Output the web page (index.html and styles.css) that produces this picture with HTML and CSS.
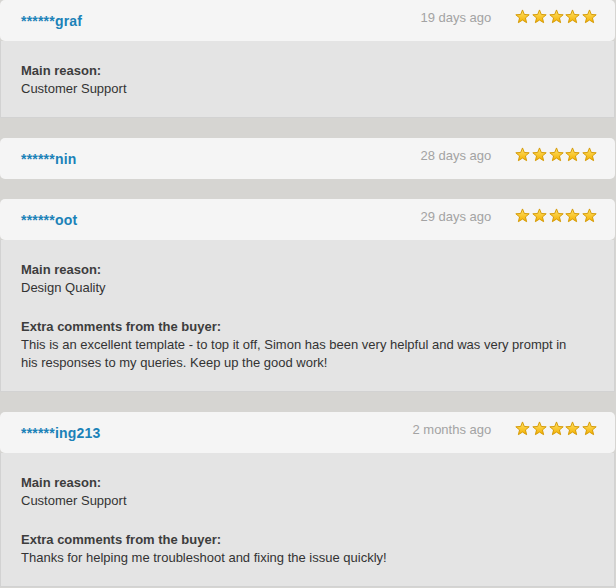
FILE: index.html
```html
<!DOCTYPE html>
<html>
<head>
<meta charset="utf-8">
<link rel="stylesheet" href="styles.css">
</head>
<body>
<svg class="defs" width="0" height="0">
  <defs>
    <linearGradient id="sg" x1="0" y1="0" x2="0" y2="1">
      <stop offset="0" stop-color="#ffe36a"/>
      <stop offset="1" stop-color="#f4b000"/>
    </linearGradient>
    <symbol id="star" viewBox="0 0 16 16">
      <polygon points="8,1 9.94,5.83 15.13,6.18 11.14,9.52 12.41,14.57 8,11.8 3.59,14.57 4.86,9.52 0.87,6.18 6.06,5.83" fill="url(#sg)" stroke="#d39700" stroke-width="1" stroke-linejoin="round"/>
    </symbol>
  </defs>
</svg>

<div class="list">
  <div class="review">
    <div class="head">
      <span class="user">******graf</span>
      <span class="meta"><span class="time">19 days ago</span><span class="stars"><svg><use href="#star"/></svg><svg><use href="#star"/></svg><svg><use href="#star"/></svg><svg><use href="#star"/></svg><svg><use href="#star"/></svg></span></span>
    </div>
    <div class="body">
      <div class="sec"><div class="label">Main reason:</div><div class="text">Customer Support</div></div>
    </div>
  </div>

  <div class="review">
    <div class="head">
      <span class="user">******nin</span>
      <span class="meta"><span class="time">28 days ago</span><span class="stars"><svg><use href="#star"/></svg><svg><use href="#star"/></svg><svg><use href="#star"/></svg><svg><use href="#star"/></svg><svg><use href="#star"/></svg></span></span>
    </div>
  </div>

  <div class="review">
    <div class="head">
      <span class="user">******oot</span>
      <span class="meta"><span class="time">29 days ago</span><span class="stars"><svg><use href="#star"/></svg><svg><use href="#star"/></svg><svg><use href="#star"/></svg><svg><use href="#star"/></svg><svg><use href="#star"/></svg></span></span>
    </div>
    <div class="body">
      <div class="sec"><div class="label">Main reason:</div><div class="text">Design Quality</div></div>
      <div class="sec"><div class="label">Extra comments from the buyer:</div><div class="text">This is an excellent template - to top it off, Simon has been very helpful and was very prompt in his responses to my queries. Keep up the good work!</div></div>
    </div>
  </div>

  <div class="review">
    <div class="head">
      <span class="user">******ing213</span>
      <span class="meta"><span class="time">2 months ago</span><span class="stars"><svg><use href="#star"/></svg><svg><use href="#star"/></svg><svg><use href="#star"/></svg><svg><use href="#star"/></svg><svg><use href="#star"/></svg></span></span>
    </div>
    <div class="body">
      <div class="sec"><div class="label">Main reason:</div><div class="text">Customer Support</div></div>
      <div class="sec"><div class="label">Extra comments from the buyer:</div><div class="text">Thanks for helping me troubleshoot and fixing the issue quickly!</div></div>
    </div>
  </div>
</div>
</body>
</html>
```

FILE: styles.css
```css
html, body {
  margin: 0;
  padding: 0;
  background: #d6d5d2;
  font-family: "Liberation Sans", Arial, sans-serif;
  font-size: 13px;
  color: #333;
}
.defs { position: absolute; width: 0; height: 0; }
.list {
  width: 615px;
  display: flex;
  flex-direction: column;
  gap: 20px;
}
.review { display: flex; flex-direction: column; }
.head {
  height: 41px;
  box-sizing: border-box;
  background: #f5f5f5;
  border-radius: 5px;
  display: flex;
  justify-content: space-between;
  align-items: flex-start;
  padding: 0 18px 0 21px;
  position: relative;
  z-index: 1;
}
.user {
  font-size: 14px;
  letter-spacing: 0.2px;
  font-weight: bold;
  color: #1b82b8;
  line-height: 16px;
  margin-top: 13px;
}
.meta {
  display: flex;
  align-items: flex-start;
  margin-top: 9px;
}
.time {
  color: #a3a3a3;
  font-size: 13px;
  line-height: 18px;
  margin-right: 24px;
}
.stars { display: flex; gap: 1.7px; }
.stars svg { width: 15px; height: 15px; display: block; }
.body {
  background: #e4e4e4;
  border: 1px solid #d2d2d2;
  border-top: none;
  padding: 21px 40px 19px 20px;
  display: flex;
  flex-direction: column;
  gap: 21px;
}
.label { font-weight: bold; color: #3d3d3d; line-height: 18px; }
.text { line-height: 18px; color: #333; }
```
